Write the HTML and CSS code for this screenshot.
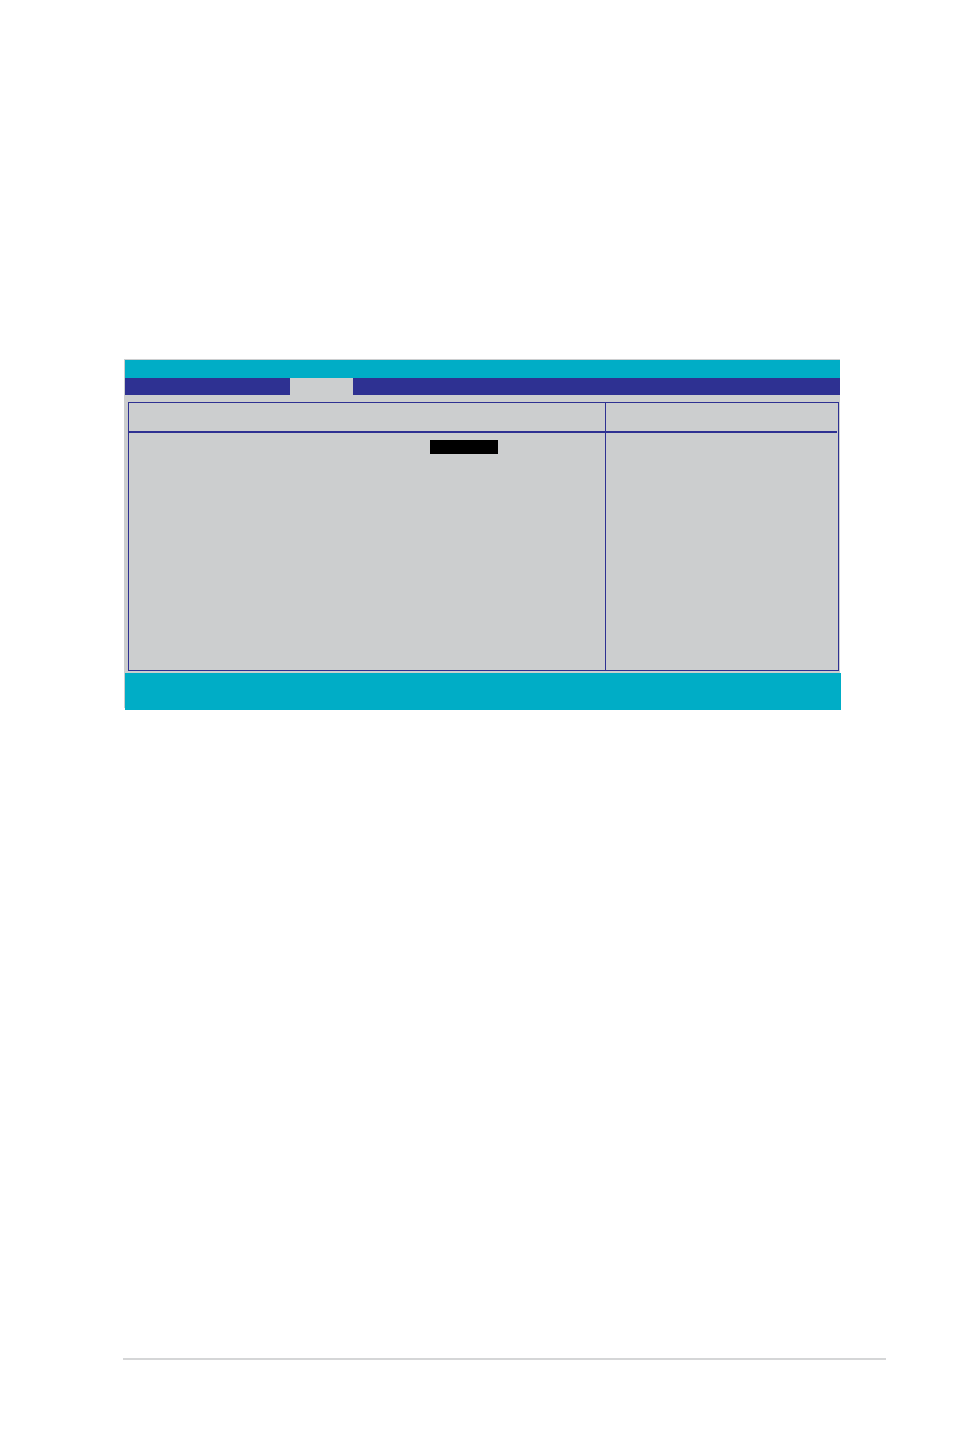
FILE: index.html
```html
<!DOCTYPE html>
<html lang="en">
<head>
    <meta charset="UTF-8">
    <meta name="viewport" content="width=device-width, initial-scale=1">
    <title>BIOS Setup</title>
    <link rel="stylesheet" href="styles.css">
</head>
<body>
    <main class="screen">
        <header class="title-bar"></header>
        <div class="menu-bar">
            <div class="menu-tab"></div>
        </div>

        <!-- Settings on the left, help on the right -->
        <div class="panel">
            <section class="settings">
                <div class="panel-head"></div>
                <div class="panel-body">
                    <div class="selected-value"></div>
                </div>
            </section>
            <aside class="help">
                <div class="panel-head"></div>
            </aside>
        </div>

        <div class="key-bar"></div>
    </main>

    <footer class="page-footer"></footer>
</body>
</html>
```

FILE: styles.css
```css
* {
    box-sizing: border-box;
}
body {
    display: flex;
    flex-direction: column;
    justify-content: space-between;
    min-height: 100vh;
    margin: 0;
    padding: 359px 68px 77px 123px;
    background: #ffffff;
    font-family: "Liberation Sans", Arial, sans-serif;
}

/* Setup screen */
.screen {
    display: flex;
    flex-direction: column;
    margin: 0 46px 0 1px;
    padding: 1px 0 0 1px;
    background: #cccecf;
}
.title-bar {
    height: 18px;
    background: #00adc6;
}
.menu-bar {
    display: flex;
    height: 17px;
    padding-left: 165px;
    background: #2e3192;
}
.menu-tab {
    width: 63px;
    background: #cccecf;
}

/* Main panel */
.panel {
    display: grid;
    grid-template-columns: 1fr 232px;
    min-height: 269px;
    margin: 7px 1px 2px 3px;
    border: 1px solid #2e3192;
}
.settings {
    border-right: 1px solid #2e3192;
}
.panel-head {
    height: 30px;
    border-bottom: 2px solid #2e3192;
}
.help .panel-head {
    margin-right: 1px;
}
.panel-body {
    padding: 7px 0 0 301px;
}
.selected-value {
    width: 68px;
    height: 14px;
    background: #000000;
}

/* Key legend, hangs slightly over the screen edge */
.key-bar {
    height: 37px;
    margin: 0 -1px -2px 0;
    background: #00adc6;
}

.page-footer {
    height: 2px;
    background: #d5d6d7;
}
```
